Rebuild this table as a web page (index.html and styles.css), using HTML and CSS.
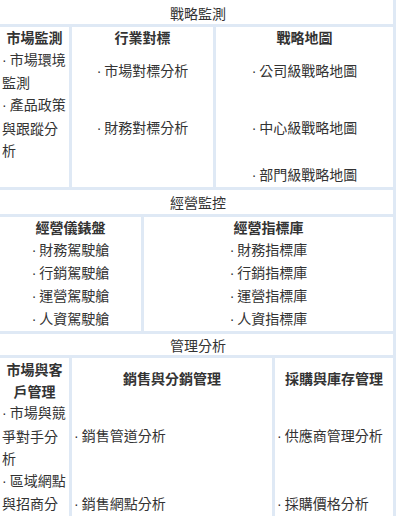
FILE: index.html
```html
<!DOCTYPE html>
<html lang="zh-Hant">
<head>
<meta charset="utf-8">
<title>管理架構</title>
<link rel="stylesheet" href="styles.css">
</head>
<body>
<div class="board">
  <div class="head head-1">戰略監測</div>
  <div class="grid grid-strategy">
    <div class="cell title center">市場監測</div>
    <div class="cell title center">行業對標</div>
    <div class="cell title center">戰略地圖</div>
    <div class="cell"><span><span class="dot">·</span>市場環境監測</span></div>
    <div class="cell center"><span><span class="dot">·</span>市場對標分析</span></div>
    <div class="cell center"><span><span class="dot">·</span>公司級戰略地圖</span></div>
    <div class="cell"><span><span class="dot">·</span>產品政策與跟蹤分析</span></div>
    <div class="cell center"><span><span class="dot">·</span>財務對標分析</span></div>
    <div class="cell center"><span><span class="dot">·</span>中心級戰略地圖</span></div>
    <div class="cell"></div>
    <div class="cell"></div>
    <div class="cell center"><span><span class="dot">·</span>部門級戰略地圖</span></div>
  </div>
  <div class="head head-2">經營監控</div>
  <div class="grid grid-ops">
    <div class="cell title center">經營儀錶盤</div>
    <div class="cell title center">經營指標庫</div>
    <div class="cell center"><span><span class="dot">·</span>財務駕駛艙</span></div>
    <div class="cell center"><span><span class="dot">·</span>財務指標庫</span></div>
    <div class="cell center"><span><span class="dot">·</span>行銷駕駛艙</span></div>
    <div class="cell center"><span><span class="dot">·</span>行銷指標庫</span></div>
    <div class="cell center"><span><span class="dot">·</span>運營駕駛艙</span></div>
    <div class="cell center"><span><span class="dot">·</span>運營指標庫</span></div>
    <div class="cell center"><span><span class="dot">·</span>人資駕駛艙</span></div>
    <div class="cell center"><span><span class="dot">·</span>人資指標庫</span></div>
  </div>
  <div class="head head-3">管理分析</div>
  <div class="grid grid-mgmt">
    <div class="cell title center">市場與客戶管理</div>
    <div class="cell title center title-mid">銷售與分銷管理</div>
    <div class="cell title center title-mid">採購與庫存管理</div>
    <div class="cell"><span><span class="dot">·</span>市場與競爭對手分析</span></div>
    <div class="cell"><span><span class="dot">·</span>銷售管道分析</span></div>
    <div class="cell"><span><span class="dot">·</span>供應商管理分析</span></div>
    <div class="cell cell-top"><span><span class="dot">·</span>區域網點與招商分析</span></div>
    <div class="cell cell-low"><span><span class="dot">·</span>銷售網點分析</span></div>
    <div class="cell cell-low"><span><span class="dot">·</span>採購價格分析</span></div>
  </div>
</div>
</body>
</html>
```
FILE: styles.css
```css
html, body {
  margin: 0;
  padding: 0;
  overflow: hidden;
  background: #ffffff;
}

body {
  font-family: "Noto Sans CJK TC", "Noto Sans", sans-serif;
  font-size: 14px;
  line-height: 22.4px;
  color: #333333;
}

.board {
  width: 393px;
  padding-right: 3px;
  background: #dfe9f5;
  display: flex;
  flex-direction: column;
  gap: 3px;
}

.head {
  background: #ffffff;
  text-align: center;
  height: 24px;
  line-height: 24px;
  padding-left: 3px;
}

.head-1 {
  line-height: 26px;
}

.head-3 {
  box-sizing: border-box;
  height: 21px;
  line-height: 19px;
  padding-top: 2px;
}

.grid {
  display: grid;
  column-gap: 3px;
  row-gap: 0;
}

.grid-strategy {
  grid-template-columns: 69px 141px 1fr;
  grid-template-rows: 21px 45px 69px 25px;
}

.grid-ops {
  grid-template-columns: 141px 1fr;
  grid-template-rows: 21px 23px 23px 23px 24px;
}

.grid-mgmt {
  grid-template-columns: 69px 200px 1fr;
  grid-template-rows: 44px 67px 80px;
}

.cell {
  background: #ffffff;
  display: flex;
  flex-direction: column;
  justify-content: center;
  padding: 0 2px;
  text-align: left;
  word-break: break-all;
}

.dot {
  font-family: "Liberation Sans", sans-serif;
  margin-right: 3px;
}

.center {
  text-align: center;
}

.title {
  font-weight: 700;
}

.title-mid {
  padding-bottom: 3px;
}

.cell-top {
  justify-content: flex-start;
}

.cell-low {
  justify-content: flex-start;
  padding-top: 23px;
}
```
